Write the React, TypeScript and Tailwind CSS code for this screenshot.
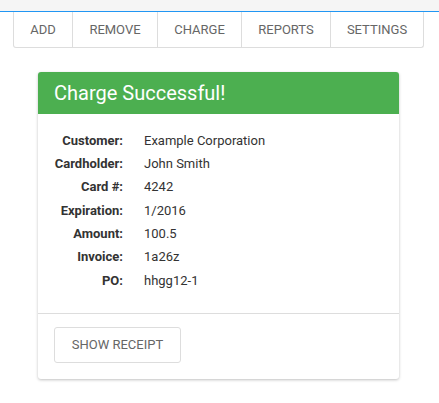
import React from 'react';

const navItems = ['Add', 'Remove', 'Charge', 'Reports', 'Settings'];

const details: [string, string][] = [
  ['Customer:', 'Example Corporation'],
  ['Cardholder:', 'John Smith'],
  ['Card #:', '4242'],
  ['Expiration:', '1/2016'],
  ['Amount:', '100.5'],
  ['Invoice:', '1a26z'],
  ['PO:', 'hhgg12-1'],
];

export default function App() {
  return (
    <div className="min-h-[403px] bg-white font-['Roboto','Liberation_Sans',sans-serif]">
      <div className="h-3 bg-[#f5f5f5] border-b border-[#2196f3]" />
      <div className="px-[13px]">
        <div className="flex w-[411px] border border-t-0 border-[#dddddd] rounded-b-[3px] bg-white">
          {navItems.map((item, i) => (
            <button
              key={item}
              className={`h-[35px] text-[13px] uppercase text-[#666666] ${
                i > 0 ? 'border-l border-[#dddddd]' : ''
              } ${
                ['w-[58px]', 'w-[85px]', 'w-[84px]', 'w-[89px]', 'w-[93px]'][i]
              }`}
            >
              {item}
            </button>
          ))}
        </div>
      </div>

      <div className="ml-[38px] mt-[24px] w-[361px] rounded-[3px] bg-white shadow-[0_1px_3px_rgba(0,0,0,0.25)] overflow-hidden">
        <div className="h-[42px] bg-[#4caf50] px-4 flex items-center">
          <h1 className="text-[20px] text-white leading-none">Charge Successful!</h1>
        </div>
        <div className="pt-[15px] pb-[21px] border-b border-[#dddddd]">
          {details.map(([label, value]) => (
            <div key={label} className="flex h-[23.3px] items-center text-[13px] text-[#333333]">
              <div className="w-[85px] text-right font-bold">{label}</div>
              <div className="ml-[21px]">{value}</div>
            </div>
          ))}
        </div>
        <div className="px-4 pt-[13px] pb-4">
          <button className="h-[36px] w-[127px] rounded-[3px] border border-[#dddddd] text-[13px] uppercase text-[#666666]">
            Show Receipt
          </button>
        </div>
      </div>
    </div>
  );
}
